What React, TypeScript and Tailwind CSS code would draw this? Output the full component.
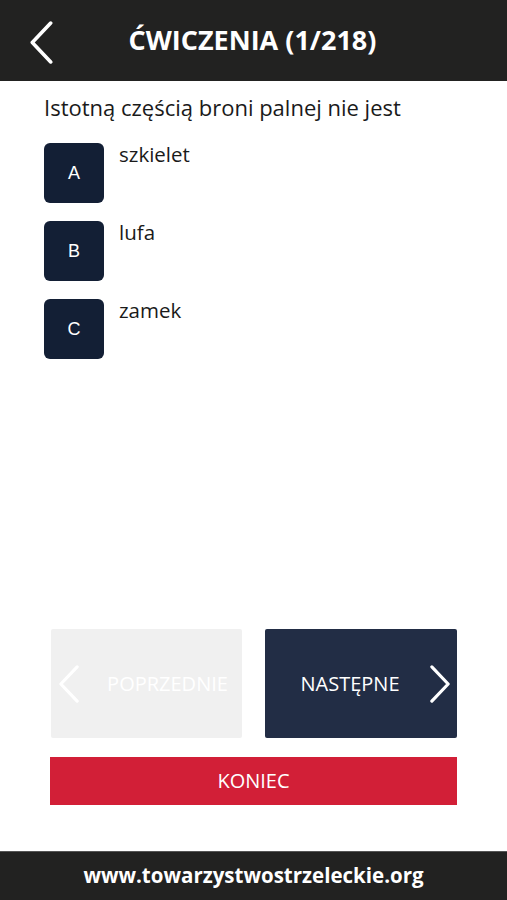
import React from 'react';

const options = [
  { letter: 'A', text: 'szkielet' },
  { letter: 'B', text: 'lufa' },
  { letter: 'C', text: 'zamek' },
];

function Chevron({ dir, className }: { dir: 'left' | 'right'; className?: string }) {
  return (
    <svg viewBox="0 0 24 42" className={className} fill="none" stroke="currentColor" strokeWidth="3.5" strokeLinecap="round" strokeLinejoin="round">
      {dir === 'left' ? <path d="M21 2 L3 21 L21 40" /> : <path d="M3 2 L21 21 L3 40" />}
    </svg>
  );
}

export default function App() {
  return (
    <div className="w-[507px] h-[900px] flex flex-col bg-white font-['Open_Sans',sans-serif]">
      {/* Header */}
      <div className="h-[81px] bg-[#222221] flex items-center relative shrink-0">
        <Chevron dir="left" className="absolute left-[29px] top-[21px] w-[25px] h-[43px] text-white" />
        <h1 className="w-full text-center text-white font-bold text-[27px] leading-none pb-[2px] pr-[2px]">
          ĆWICZENIA (1/218)
        </h1>
      </div>

      {/* Question */}
      <div className="flex-1 px-[44px] pt-[12px]">
        <p className="text-[22px] text-[#1a1a1a] leading-[28px]">Istotną częścią broni palnej nie jest</p>
        <div className="flex flex-col gap-[18px] mt-[22px]">
          {options.map(o => (
            <div key={o.letter} className="flex items-start gap-[15px]">
              <div className="w-[60px] h-[60px] rounded-[6px] bg-[#131f35] flex items-center justify-center text-white text-[18px] font-['Liberation_Sans',sans-serif]">
                {o.letter}
              </div>
              <span className="text-[20.5px] text-[#1a1a1a] leading-[24px] -mt-[1px]">{o.text}</span>
            </div>
          ))}
        </div>
      </div>

      {/* Navigation */}
      <div className="px-[50px] pb-[46px] flex flex-col gap-[19px]">
        <div className="flex gap-[23px] pl-[1px]">
          <button className="relative w-[191px] h-[109px] bg-[#f0f0f0] rounded-[2px] flex items-center justify-center text-white text-[20px] pl-[42px]">
            <Chevron dir="left" className="absolute left-[7px] top-[36px] w-[22px] h-[38px] text-white" />
            POPRZEDNIE
          </button>
          <button className="relative w-[192px] h-[109px] bg-[#222d45] rounded-[2px] flex items-center justify-center text-white text-[20px] pr-[22px]">
            NASTĘPNE
            <Chevron dir="right" className="absolute right-[6px] top-[36px] w-[22px] h-[38px] text-white" />
          </button>
        </div>
        <button className="h-[48px] bg-[#d21f37] text-white text-[20px] flex items-center justify-center">
          KONIEC
        </button>
      </div>

      {/* Footer */}
      <div className="h-[49px] bg-[#222221] border-t border-[#555] flex items-center justify-center shrink-0">
        <span className="text-white font-bold text-[20.5px] pb-[1px]">www.towarzystwostrzeleckie.org</span>
      </div>
    </div>
  );
}
